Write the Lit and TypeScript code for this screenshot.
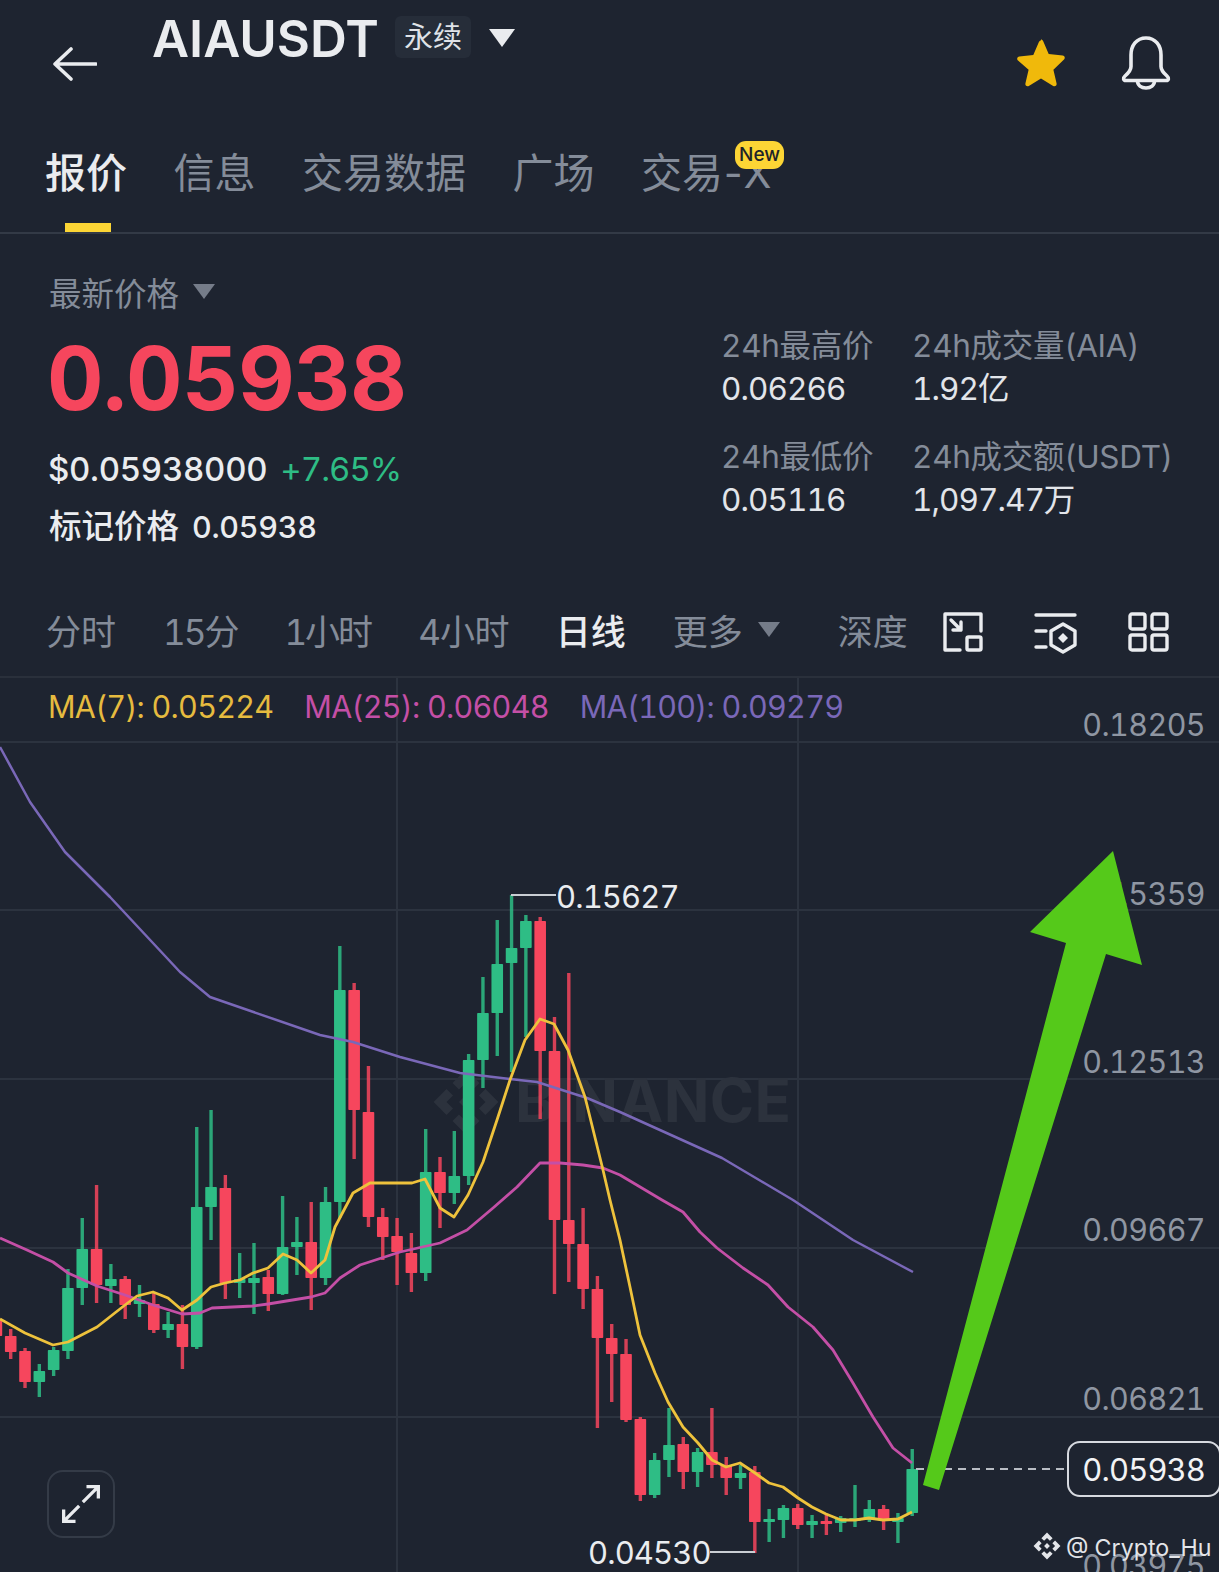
import { LitElement, html, css, svg } from "lit";
import { customElement } from "lit/decorators.js";

type C = [number, number, number, number, number];
// [up, wickTop, bodyTop, bodyBottom, wickBottom]
const CANDLES: C[] = [
  [0,1310,1320,1336,1345],[0,1329,1336,1352,1359],[0,1348,1351,1382,1388],[1,1364,1371,1382,1397],
  [1,1347,1350,1370,1376],[1,1269,1288,1351,1359],[1,1218,1249,1288,1305],[0,1185,1249,1285,1303],
  [1,1264,1279,1286,1303],[0,1276,1279,1305,1319],[1,1285,1300,1304,1317],[0,1293,1304,1330,1333],
  [1,1312,1324,1330,1338],[0,1305,1324,1347,1369],[1,1127,1207,1347,1349],[1,1110,1187,1207,1240],
  [0,1175,1188,1283,1299],[1,1253,1279,1283,1298],[1,1243,1278,1283,1314],[0,1270,1277,1294,1311],
  [1,1196,1247,1294,1295],[1,1217,1242,1247,1275],[0,1202,1242,1278,1310],[1,1187,1202,1278,1285],
  [1,946,990,1202,1218],[0,983,990,1110,1159],[0,1066,1112,1217,1227],[0,1208,1217,1237,1260],
  [0,1218,1236,1252,1285],[0,1233,1253,1273,1292],[1,1129,1172,1273,1281],[0,1157,1172,1193,1228],
  [1,1131,1176,1193,1204],[1,1054,1060,1176,1185],[1,977,1013,1060,1088],[1,920,964,1013,1056],
  [1,895,948,963,1072],[1,915,921,948,1037],[0,917,921,1051,1119],[0,1017,1051,1220,1294],
  [0,973,1220,1244,1282],[0,1208,1244,1289,1309],[0,1276,1289,1338,1428],[0,1324,1338,1354,1402],
  [0,1339,1354,1420,1422],[0,1417,1419,1495,1501],[1,1453,1460,1495,1498],[1,1408,1445,1460,1477],
  [0,1437,1444,1472,1489],[1,1448,1452,1472,1487],[0,1408,1452,1465,1478],[0,1457,1465,1478,1495],
  [1,1465,1473,1478,1489],[0,1466,1472,1522,1553],[1,1509,1519,1522,1542],[1,1505,1508,1520,1538],
  [0,1504,1508,1525,1529],[1,1515,1521,1525,1538],[0,1515,1521,1524,1535],[1,1516,1518,1523,1532],
  [1,1485,1518,1521,1527],[1,1500,1509,1520,1522],[0,1505,1509,1520,1530],[1,1513,1518,1522,1543],
  [1,1449,1469,1513,1516],
];

const MA7 = "0,1319 25,1333 53,1345 68,1342 97,1327 125,1305 137,1296 153,1292 168,1298 182,1310 197,1300 211,1287 225,1283 240,1280 253,1273 268,1268 283,1254 297,1260 311,1273 325,1260 335,1227 353,1193 370,1183 395,1183 412,1183 425,1179 440,1208 454,1217 468,1195 483,1162 497,1120 510,1080 525,1040 540,1019 554,1024 568,1050 585,1097 603,1170 610,1200 620,1240 630,1287 640,1335 655,1373 668,1402 683,1427 698,1443 712,1460 726,1467 740,1463 755,1473 769,1483 783,1487 798,1498 812,1507 826,1514 841,1520 855,1520 869,1518 883,1520 898,1519 912,1512";
const MA25 = "0,1238 27,1250 53,1262 68,1273 97,1286 125,1295 153,1305 182,1314 200,1313 212,1308 253,1306 268,1304 311,1297 325,1293 340,1278 360,1265 400,1252 440,1243 467,1230 493,1208 517,1187 540,1163 560,1163 583,1165 603,1168 620,1175 662,1200 683,1212 700,1232 717,1248 743,1268 768,1285 788,1307 813,1327 833,1350 853,1383 873,1417 893,1448 912,1463";
const MA100 = "0,747 30,802 65,852 110,897 180,972 210,997 320,1035 353,1042 400,1057 460,1073 510,1079 537,1082 587,1098 620,1112 722,1158 793,1200 853,1240 913,1272";

const BINANCE_MARK = "M0 -12 L5 -7 L2.6 -4.6 L0 -7.2 L-2.6 -4.6 L-5 -7 Z M7.2 -4.8 L12 0 L7.2 4.8 L4.8 2.4 L7.2 0 L4.8 -2.4 Z M-7.2 -4.8 L-4.8 -2.4 L-7.2 0 L-4.8 2.4 L-7.2 4.8 L-12 0 Z M0 -2.6 L2.6 0 L0 2.6 L-2.6 0 Z M2.6 4.6 L5 7 L0 12 L-5 7 L-2.6 4.6 L0 7.2 Z";

@customElement("app-root")
export class AppRoot extends LitElement {
  static styles = css`
    :host {
      display: block;
      width: 1219px;
      height: 1572px;
      overflow: hidden;
      background: #1e2430;
      color: #eaecef;
      font-family: Inter, "Noto Sans CJK SC", sans-serif;
      font-variant-numeric: tabular-nums;
    }
    svg { display: block; }
    .header { display: flex; height: 122px; align-items: flex-start; }
    .back { margin: 47px 0 0 53px; }
    .title { margin: 10px 0 0 55px; font-size: 51px; line-height: 58px; font-weight: 600; letter-spacing: 0; color: #eaecef; }
    .tag { margin: 16px 0 0 16px; width: 76px; height: 42px; border-radius: 6px; background: #262d39; font-size: 29px; line-height: 44px; text-align: center; color: #dfe2e7; }
    .title-caret { margin: 29px 0 0 18px; }
    .spacer { flex: 1; }
    .star { margin: 38px 0 0 0; }
    .bell { margin: 36px 48px 0 54px; }

    .tabs { display: flex; gap: 46.5px; height: 110px; padding-left: 45px; border-bottom: 2px solid #333a46; }
    .tab { position: relative; font-size: 41px; line-height: 50px; padding-top: 26px; color: #848c99; }
    .tab.active { color: #eaecef; font-weight: 500; }
    .tab.active::after { content: ""; position: absolute; left: 20px; right: 16px; bottom: 0; height: 9px; background: #fcd535; }
    .x { letter-spacing: -3px; margin-left: -3px; }
    .new { position: absolute; left: 94px; top: 19px; width: 49px; height: 28px; border-radius: 11px; background: #fcd535; color: #1e2329; font-size: 19px; line-height: 28px; font-weight: 500; letter-spacing: 0; text-align: center; }

    .summary { display: flex; height: 356px; padding: 35px 0 0 49px; box-sizing: border-box; }
    .left { width: 672px; }
    .label { display: flex; align-items: center; gap: 14px; height: 44px; font-size: 32.5px; color: #848c99; }
    .price { margin: 15px 0 0 -2px; height: 100px; line-height: 100px; font-size: 87.5px; font-weight: 700; color: #f6465d; letter-spacing: -0.5px; }
    .fiat { margin-top: 21px; display: flex; gap: 13px; height: 40px; line-height: 40px; font-size: 33px; font-weight: 500; letter-spacing: -0.3px; margin-left: -1px; }
    .pct { color: #2ebd85; font-weight: 400; letter-spacing: -1px; }
    .mark { margin-top: 18px; display: flex; gap: 13px; height: 40px; line-height: 40px; font-size: 32.5px; font-weight: 500; }
    .mark span { font-size: 30.5px; letter-spacing: -0.3px; }
    .stats { display: grid; grid-template-columns: 191px auto; margin-top: 57px; align-content: start; }
    .stat { height: 111px; }
    .stat .k { height: 40px; line-height: 40px; font-size: 31.5px; letter-spacing: -0.3px; color: #848c99; }
    .stat .v { margin-top: 3px; height: 40px; line-height: 40px; font-size: 31.5px; letter-spacing: -0.95px; color: #e2e5ea; }

    .intervals { display: flex; align-items: center; gap: 47px; height: 88px; padding-left: 46px; box-sizing: border-box; border-bottom: 2px solid #2a303b; font-size: 35px; color: #848c99; }
    .intervals .t { padding-bottom: 7px; }
    .intervals .on { color: #eaecef; font-weight: 500; }
    .intervals .n { letter-spacing: -2px; }
    .intervals .n4 { letter-spacing: -0.7px; }
    .more { display: flex; align-items: center; gap: 15px; }
    .depth { margin-left: 11px; }
    .tools { display: flex; gap: 50px; margin-left: -12px; }
    .tools .mid { margin-left: 1px; }

    .chart { position: relative; height: 894px; overflow: hidden; }
    .plot { position: absolute; left: 0; top: 0; }
    .ma { position: absolute; left: 48px; top: 7px; display: flex; gap: 31px; font-size: 30.5px; line-height: 44px; letter-spacing: -0.72px; }
    .ma7 { color: #e6bb3f; }
    .ma25 { color: #c44fa6; }
    .ma100 { color: #7a68b8; }
    .expand { position: absolute; left: 47px; top: 792px; width: 64px; height: 64px; border: 2px solid #343b47; border-radius: 16px; display: flex; align-items: center; justify-content: center; }
    text { font-family: Inter, "Noto Sans CJK SC", sans-serif; font-variant-numeric: tabular-nums; }
    .ax { letter-spacing: -0.6px; }
    .pv { letter-spacing: -0.9px; }
  `;

  private candles() {
    return CANDLES.map((c, i) => {
      const x = -3.6 + 14.31 * i;
      const col = c[0] ? "#2ebd85" : "#f6465d";
      return svg`<line x1=${x} x2=${x} y1=${c[1]} y2=${c[4]} stroke=${col} stroke-width="3.4" opacity="0.85"></line>
        <rect x=${x - 5.8} y=${c[2]} width="11.6" height=${Math.max(c[3] - c[2], 3)} rx="0.8" fill=${col}></rect>`;
    });
  }

  private plot() {
    const axis: [string, number][] = [["0.18205", 736], ["0.15359", 905], ["0.12513", 1073], ["0.09667", 1241], ["0.06821", 1410], ["0.03975", 1577]];
    return html`<svg class="plot" width="1219" height="894" viewBox="0 678 1219 894">
      ${[742, 910, 1079, 1248, 1417].map((y) => svg`<line x1="0" x2="1219" y1=${y} y2=${y} stroke="#2c333f" stroke-width="2"></line>`)}
      ${[397, 798].map((x) => svg`<line x1=${x} x2=${x} y1="678" y2="1572" stroke="#2c333f" stroke-width="2"></line>`)}
      <g fill="#2c323d">
        <path transform="translate(466 1102) scale(2.7)" d=${BINANCE_MARK}></path>
        <text x="515" y="1122" font-size="60" font-weight="700" letter-spacing="0.4">BINANCE</text>
      </g>
      ${axis.map(([t, y]) => svg`<text class="ax" x="1205" y=${y} text-anchor="end" font-size="30.5" fill="#8f96a2">${t}</text>`)}
      ${this.candles()}
      <polyline points=${MA100} fill="none" stroke="#7a68b8" stroke-width="2.5" stroke-linejoin="round"></polyline>
      <polyline points=${MA25} fill="none" stroke="#c44fa6" stroke-width="2.8" stroke-linejoin="round"></polyline>
      <polyline points=${MA7} fill="none" stroke="#eec23c" stroke-width="2.8" stroke-linejoin="round"></polyline>

      <path d="M511 895H556" fill="none" stroke="#c9cdd3" stroke-width="2"></path>
      <text class="pv" x="556" y="908" font-size="31" fill="#eaecef">0.15627</text>
      <path d="M710 1552H755" fill="none" stroke="#c9cdd3" stroke-width="2"></path>
      <text class="pv" x="588" y="1564" font-size="31" fill="#eaecef">0.04530</text>

      <line x1="916" x2="1068" y1="1469" y2="1469" stroke="#b9bdc4" stroke-width="2" stroke-dasharray="8 6"></line>
      <rect x="1068" y="1442" width="152" height="54" rx="12" fill="#1e2430" stroke="#d7dae0" stroke-width="2"></rect>
      <text class="pv" x="1205" y="1481" text-anchor="end" font-size="31" fill="#f2f3f5">0.05938</text>

      <polygon points="1113,851 1030,932 1066,943 923,1485 939,1490 1106,954 1142,965" fill="#55c91a"></polygon>

      <path transform="translate(1047 1546) scale(1.12)" d=${BINANCE_MARK} fill="#e3e5e9"></path>
      <text x="1066" y="1556" font-size="23.2" fill="#e3e5e9">@ Crypto_Hu</text>
    </svg>`;
  }

  render() {
    return html`
      <div class="header">
        <svg class="back" width="44" height="34" viewBox="0 0 44 34" fill="none" stroke="#eaecef" stroke-width="3.6" stroke-linecap="round" stroke-linejoin="round">
          <path d="M43 17H2M18 2L2 17L18 32"></path>
        </svg>
        <div class="title">AIAUSDT</div>
        <div class="tag">永续</div>
        <svg class="title-caret" width="26" height="18" viewBox="0 0 26 18"><path d="M0 0H26L13 18Z" fill="#eaecef"></path></svg>
        <div class="spacer"></div>
        <svg class="star" width="52" height="51" viewBox="0 0 52 51"><path d="M26 1.5c1 0 1.7.7 2.1 1.6l5.6 13 14 1.3c2 .2 2.8 2.7 1.3 4L38.400 31.700l3.200 13.800c.5 2-1.700 3.500-3.400 2.400L26 40.600 13.800 47.900c-1.700 1.100-3.900-.4-3.400-2.400l3.200-13.800L3 22.400c-1.500-1.300-.7-3.800 1.300-4l14-1.300 5.600-13c.4-.9 1.100-1.600 2.100-1.600Z" fill="#f0b90b"></path></svg>
        <svg class="bell" width="50" height="54" viewBox="0 0 50 54" fill="none" stroke="#eaecef" stroke-width="3.6" stroke-linejoin="round">
          <path d="M25 2C15.500 2 10 9.500 10 19v11.500c0 2.500-2 6-6 9.500-2 1.800-2 4.500 1 4.500h40c3 0 3-2.700 1-4.500-4-3.500-6-7-6-9.500V19C40 9.500 34.500 2 25 2Z"></path>
          <path d="M16.500 44.500c0 5 3.800 7.500 8.500 7.500s8.500-2.500 8.500-7.500"></path>
        </svg>
      </div>

      <div class="tabs">
        <div class="tab active">报价</div>
        <div class="tab">信息</div>
        <div class="tab">交易数据</div>
        <div class="tab">广场</div>
        <div class="tab">交易<span class="x">-X</span><span class="new">New</span></div>
      </div>

      <div class="summary">
        <div class="left">
          <div class="label">最新价格
            <svg width="22" height="15" viewBox="0 0 22 15"><path d="M0 0H22L11 15Z" fill="#757c89"></path></svg>
          </div>
          <div class="price">0.05938</div>
          <div class="fiat">$0.05938000 <span class="pct">+7.65%</span></div>
          <div class="mark">标记价格 <span>0.05938</span></div>
        </div>
        <div class="stats">
          <div class="stat"><div class="k">24h最高价</div><div class="v">0.06266</div></div>
          <div class="stat"><div class="k">24h成交量(AIA)</div><div class="v">1.92亿</div></div>
          <div class="stat"><div class="k">24h最低价</div><div class="v">0.05116</div></div>
          <div class="stat"><div class="k">24h成交额(USDT)</div><div class="v">1,097.47万</div></div>
        </div>
      </div>

      <div class="intervals">
        <span class="t">分时</span><span class="t n">15分</span><span class="t n">1小时</span><span class="t n4">4小时</span>
        <span class="t on">日线</span>
        <span class="t more">更多 <svg width="22" height="15" viewBox="0 0 22 15"><path d="M0 0H22L11 15Z" fill="#757c89"></path></svg></span>
        <span class="t depth">深度</span>
        <span class="tools">
          <svg width="40" height="40" viewBox="0 0 40 40" fill="none" stroke="#eaecef" stroke-width="3.4" stroke-linejoin="round" stroke-linecap="round">
            <path d="M17 38H2V2H38V19"></path>
            <rect x="24" y="25" width="14" height="13" rx="1.500"></rect>
            <path d="M8 8L18 18M18 10V18H10"></path>
          </svg>
          <svg class="mid" width="44" height="42" viewBox="0 0 44 42" fill="none" stroke="#eaecef" stroke-width="3.4" stroke-linejoin="round" stroke-linecap="round">
            <path d="M2 3H41M2 19H12M2 35H12"></path>
            <path d="M29 12L41 19V33L29 40L17 33V19Z"></path>
            <path d="M29 21L34 26L29 31L24 26Z" fill="#eaecef" stroke="none"></path>
          </svg>
          <svg width="42" height="40" viewBox="0 0 42 40" fill="none" stroke="#eaecef" stroke-width="3.4" stroke-linejoin="round">
            <rect x="2" y="2" width="15" height="15" rx="2"></rect>
            <rect x="24" y="2" width="15" height="15" rx="2"></rect>
            <rect x="2" y="23" width="15" height="15" rx="2"></rect>
            <rect x="24" y="23" width="15" height="15" rx="2"></rect>
          </svg>
        </span>
      </div>

      <div class="chart">
        ${this.plot()}
        <div class="ma">
          <span class="ma7">MA(7): 0.05224</span>
          <span class="ma25">MA(25): 0.06048</span>
          <span class="ma100">MA(100): 0.09279</span>
        </div>
        <div class="expand">
          <svg width="42" height="42" viewBox="0 0 46 46" fill="none" stroke="#eaecef" stroke-width="3.6">
            <path d="M25 21L42 4M29 4H42V17"></path>
            <path d="M21 25L4 42M17 42H4V29"></path>
          </svg>
        </div>
      </div>
    `;
  }
}
